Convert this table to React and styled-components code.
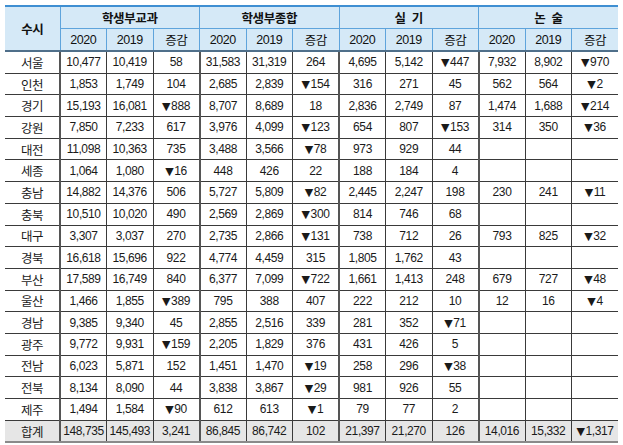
import React from 'react';
import styled, { createGlobalStyle } from 'styled-components';

const GlobalStyle = createGlobalStyle`
    body {
        margin: 0;
        background: #ffffff;
        font-family: 'Liberation Sans', 'Noto Sans CJK KR', sans-serif;
    }
`;

const Wrapper = styled.div`
    padding: 5px 0 0 5px;
`;

const Table = styled.table`
    width: 613px;
    border-collapse: collapse;
    table-layout: fixed;
    font-size: 12px;
    color: #1a1a1a;
    letter-spacing: -0.4px;
`;

const HeadCell = styled.th`
    height: 21px;
    padding: 0;
    background: #d5e9f7;
    font-weight: ${p => (p.$group ? 600 : 'normal')};
    color: #111;
    font-size: ${p => (p.$group ? '12.5px' : '12.5px')};
    text-align: center;
    border-left: ${p => (p.$first ? 'none' : '1px solid #5ea4dc')};
    border-top: ${p => (p.$top ? '2px solid #3f8fd2' : '1px solid #5ea4dc')};
    border-bottom: ${p => (p.$last ? '2px solid #4f6f8a' : '1px solid #5ea4dc')};
    white-space: pre;
`;

const Cell = styled.td`
    height: 20.7px;
    padding: 0;
    text-align: center;
    white-space: nowrap;
    font-size: ${p => (p.$label ? '12.5px' : '12px')};
    background: ${p => (p.$total ? '#e6e6e6' : '#ffffff')};
    border-left: ${p => (p.$first ? 'none' : p.$groupStart ? '2px solid #555' : '1px solid #3a3a3a')};
    border-top: 1px solid #3a3a3a;
    border-bottom: ${p => (p.$total ? '2px solid #8a8a8a' : '1px solid #3a3a3a')};
`;

const Tri = styled.span`
    font-family: 'DejaVu Sans', sans-serif;
    font-size: 11px;
    margin-right: 1px;
`;

const groups = ['학생부교과', '학생부종합', '실  기', '논  술'];
const years = ['2020', '2019', '증감'];

const rows = [
    ['서울', '10,477', '10,419', '58', '31,583', '31,319', '264', '4,695', '5,142', '▼447', '7,932', '8,902', '▼970'],
    ['인천', '1,853', '1,749', '104', '2,685', '2,839', '▼154', '316', '271', '45', '562', '564', '▼2'],
    ['경기', '15,193', '16,081', '▼888', '8,707', '8,689', '18', '2,836', '2,749', '87', '1,474', '1,688', '▼214'],
    ['강원', '7,850', '7,233', '617', '3,976', '4,099', '▼123', '654', '807', '▼153', '314', '350', '▼36'],
    ['대전', '11,098', '10,363', '735', '3,488', '3,566', '▼78', '973', '929', '44', '', '', ''],
    ['세종', '1,064', '1,080', '▼16', '448', '426', '22', '188', '184', '4', '', '', ''],
    ['충남', '14,882', '14,376', '506', '5,727', '5,809', '▼82', '2,445', '2,247', '198', '230', '241', '▼11'],
    ['충북', '10,510', '10,020', '490', '2,569', '2,869', '▼300', '814', '746', '68', '', '', ''],
    ['대구', '3,307', '3,037', '270', '2,735', '2,866', '▼131', '738', '712', '26', '793', '825', '▼32'],
    ['경북', '16,618', '15,696', '922', '4,774', '4,459', '315', '1,805', '1,762', '43', '', '', ''],
    ['부산', '17,589', '16,749', '840', '6,377', '7,099', '▼722', '1,661', '1,413', '248', '679', '727', '▼48'],
    ['울산', '1,466', '1,855', '▼389', '795', '388', '407', '222', '212', '10', '12', '16', '▼4'],
    ['경남', '9,385', '9,340', '45', '2,855', '2,516', '339', '281', '352', '▼71', '', '', ''],
    ['광주', '9,772', '9,931', '▼159', '2,205', '1,829', '376', '431', '426', '5', '', '', ''],
    ['전남', '6,023', '5,871', '152', '1,451', '1,470', '▼19', '258', '296', '▼38', '', '', ''],
    ['전북', '8,134', '8,090', '44', '3,838', '3,867', '▼29', '981', '926', '55', '', '', ''],
    ['제주', '1,494', '1,584', '▼90', '612', '613', '▼1', '79', '77', '2', '', '', ''],
];

const total = ['합계', '148,735', '145,493', '3,241', '86,845', '86,742', '102', '21,397', '21,270', '126', '14,016', '15,332', '▼1,317'];

// values that start with ▼ get a slightly larger triangle glyph
const Value = ({ v }) =>
    v.startsWith('▼') ? <><Tri>▼</Tri>{v.slice(1)}</> : v;

const DataRow = ({ cells, isTotal }) => (
    <tr>
        {cells.map((v, i) => (
            <Cell key={i} $first={i === 0} $label={i === 0} $groupStart={i % 3 === 1} $total={isTotal}>
                <Value v={v} />
            </Cell>
        ))}
    </tr>
);

export default function App() {
    return (
        <Wrapper>
            <GlobalStyle />
            <Table>
                <colgroup>
                    <col style={{ width: 55 }} />
                    {Array.from({ length: 12 }).map((_, i) => <col key={i} />)}
                </colgroup>
                <thead>
                    <tr>
                        <HeadCell rowSpan={2} $first $top $last $group>수시</HeadCell>
                        {groups.map(g => (
                            <HeadCell key={g} colSpan={3} $top $group>{g}</HeadCell>
                        ))}
                    </tr>
                    <tr>
                        {groups.map(g => years.map(y => (
                            <HeadCell key={g + y} $last>{y}</HeadCell>
                        )))}
                    </tr>
                </thead>
                <tbody>
                    {rows.map(r => <DataRow key={r[0]} cells={r} />)}
                    <DataRow cells={total} isTotal />
                </tbody>
            </Table>
        </Wrapper>
    );
}
